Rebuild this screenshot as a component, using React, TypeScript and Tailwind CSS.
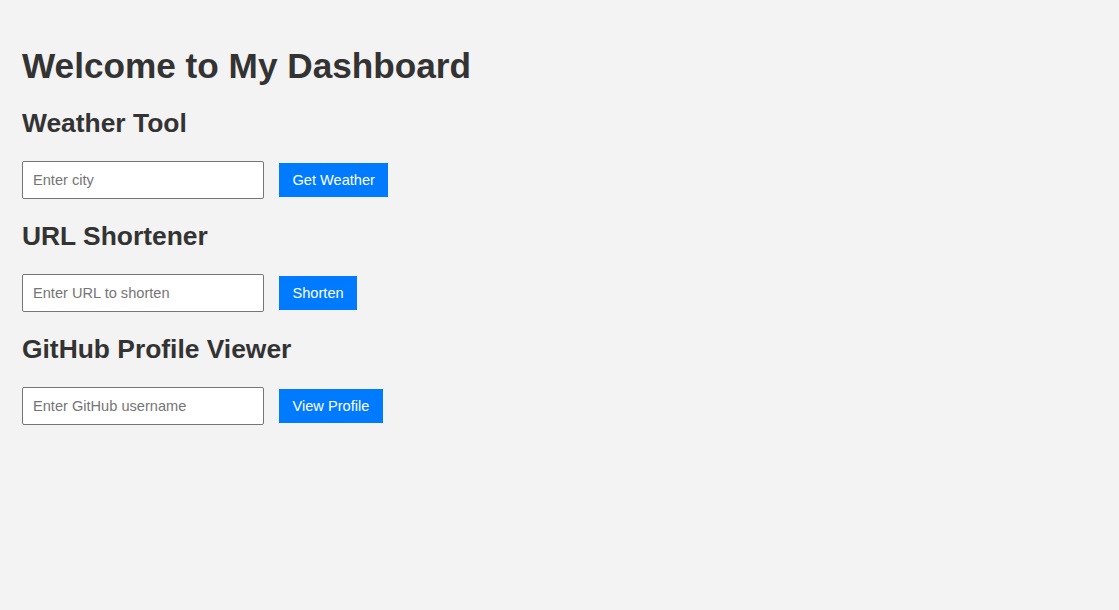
import React, { useState } from 'react';

const Tool: React.FC<{ title: string; placeholder: string; button: string }> = ({ title, placeholder, button }) => {
  const [value, setValue] = useState('');
  return (
    <section className="mt-[22px] first:mt-[23px]">
      <h2 className="text-[26.4px] leading-[30px] font-bold text-[#333] mb-[23px]">{title}</h2>
      <div className="flex items-center gap-[15px]">
        <input
          type="text"
          value={value}
          onChange={e => setValue(e.target.value)}
          placeholder={placeholder}
          className="w-[242px] h-[38px] px-[10px] bg-white border border-[#767676] rounded-[2px] text-[14.6px] text-[#333] placeholder:text-[#757575] outline-none"
        />
        <button className="h-[34px] px-[13.5px] bg-[#007bff] text-white text-[14.6px] leading-[17px]">
          {button}
        </button>
      </div>
    </section>
  );
};

export default function App() {
  return (
    <div className="min-h-[610px] bg-[#f3f3f3] px-[22px] pt-[46px] font-['Liberation_Sans',Arial,sans-serif] text-[#333]">
      <h1 className="text-[35.2px] leading-[40px] font-bold">Welcome to My Dashboard</h1>
      <Tool title="Weather Tool" placeholder="Enter city" button="Get Weather" />
      <Tool title="URL Shortener" placeholder="Enter URL to shorten" button="Shorten" />
      <Tool title="GitHub Profile Viewer" placeholder="Enter GitHub username" button="View Profile" />
    </div>
  );
}
